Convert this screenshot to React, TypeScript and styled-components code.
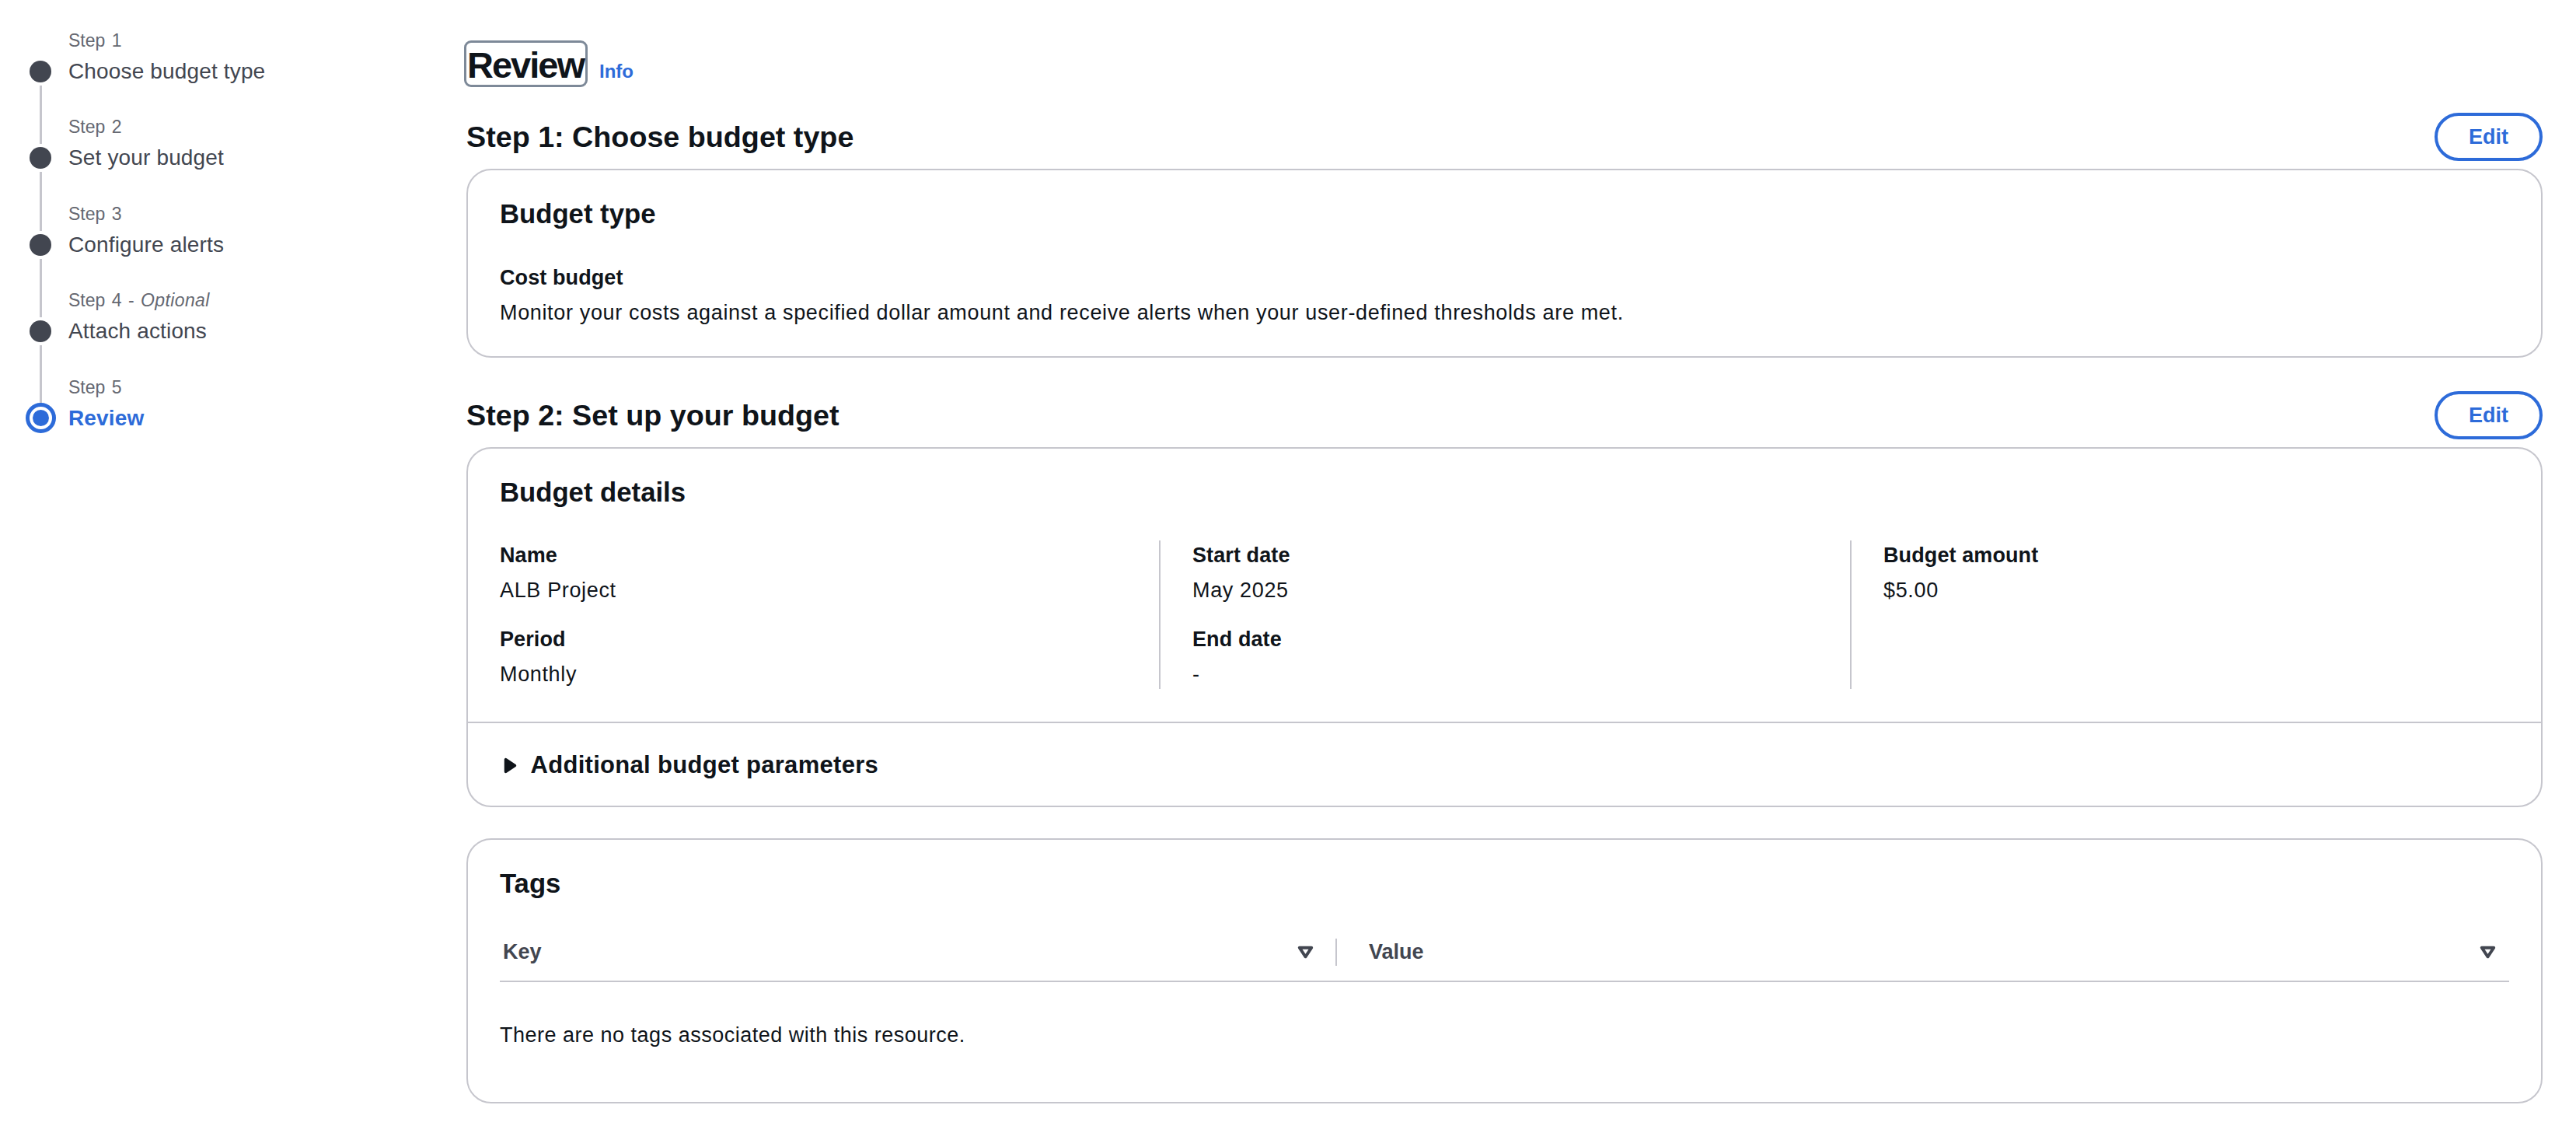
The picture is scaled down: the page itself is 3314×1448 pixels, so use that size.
import React from 'react';
import styled, { createGlobalStyle } from 'styled-components';

const BLUE = '#2d6bd9';
const BORDER = '#c6c6cd';
const TEXT = '#0f141a';
const SUBTLE = '#424650';

const GlobalStyle = createGlobalStyle`
  html, body { margin: 0; padding: 0; background: #ffffff; }
  body { font-family: "Liberation Sans", Arial, sans-serif; color: ${TEXT}; }
  * { box-sizing: border-box; }
`;

const Page = styled.div`
  display: grid;
  grid-template-columns: 600px 1fr;
  min-height: 1448px;
`;

/* ---------- Sidebar / wizard navigation ---------- */
const Sidebar = styled.nav`
  padding: 36.5px 0 0 38px;
`;

const StepList = styled.ol`
  list-style: none;
  margin: 0;
  padding: 0;
`;

const StepItem = styled.li`
  display: grid;
  grid-template-columns: 50px 1fr;
`;

const Rail = styled.div`
  display: flex;
  flex-direction: column;
  align-items: center;
  width: 28px;
`;

const RailTop = styled.div<{ $hidden?: boolean }>`
  width: 3px;
  height: 37px;
  margin-bottom: 4px;
  background: ${(p) => (p.$hidden ? 'transparent' : BORDER)};
`;

const RailBottom = styled.div<{ $hidden?: boolean }>`
  width: 3px;
  flex: 1;
  margin-top: 4px;
  background: ${(p) => (p.$hidden ? 'transparent' : BORDER)};
`;

const Dot = styled.span`
  flex: none;
  width: 28px;
  height: 28px;
  border-radius: 50%;
  background: ${SUBTLE};
`;

const ActiveRing = styled.span`
  flex: none;
  width: 39px;
  height: 39px;
  margin: -5.5px 0;
  border: 5px solid ${BLUE};
  border-radius: 50%;
  background: #fff;
  display: flex;
  align-items: center;
  justify-content: center;

  &::after {
    content: '';
    width: 21px;
    height: 21px;
    border-radius: 50%;
    background: ${BLUE};
  }
`;

const StepText = styled.div`
  display: flex;
  flex-direction: column;
  padding-bottom: 37.6px;
`;

const StepLabel = styled.span`
  font-size: 23px;
  line-height: 31px;
  word-spacing: 2px;
  color: #656871;

  em {
    font-style: italic;
    letter-spacing: 0.4px;
  }
`;

const StepTitle = styled.span<{ $active?: boolean }>`
  margin-top: 5px;
  font-size: 28px;
  line-height: 38px;
  letter-spacing: 0.15px;
  color: ${(p) => (p.$active ? BLUE : SUBTLE)};
  font-weight: ${(p) => (p.$active ? 700 : 400)};
`;

/* ---------- Main ---------- */
const Main = styled.main`
  display: flex;
  flex-direction: column;
  padding: 55px 43px 30px 0;
`;

const TitleRow = styled.div`
  display: flex;
  align-items: baseline;
  gap: 18px;
`;

const PageTitle = styled.h1`
  margin: 0;
  padding: 4px 2px 0 1px;
  font-size: 47px;
  line-height: 50px;
  letter-spacing: -2px;
  font-weight: 700;
  color: ${TEXT};
  outline: 3px solid #7d8998;
  border-radius: 6px;
`;

const InfoLink = styled.a`
  font-size: 24px;
  font-weight: 700;
  color: ${BLUE};
  text-decoration: none;
`;

const SectionHeader = styled.div<{ $first?: boolean }>`
  display: flex;
  align-items: center;
  justify-content: space-between;
  margin-top: ${(p) => (p.$first ? '36px' : '43px')};
  margin-bottom: 10px;
`;

const SectionTitle = styled.h2`
  margin: 0;
  font-size: 37.7px;
  line-height: 50px;
  font-weight: 700;
  color: ${TEXT};
`;

const EditButton = styled.button`
  height: 62px;
  padding: 0 40px;
  border: 4px solid ${BLUE};
  border-radius: 31px;
  background: #fff;
  color: ${BLUE};
  font-family: inherit;
  font-size: 27px;
  font-weight: 700;
  line-height: 38px;
  cursor: pointer;
`;

const Card = styled.section<{ $spaced?: boolean }>`
  border: 2px solid ${BORDER};
  border-radius: 32px;
  background: #fff;
  margin-top: ${(p) => (p.$spaced ? '40px' : '0')};
  overflow: hidden;
`;

const CardBody = styled.div<{ $pb: number }>`
  padding: 34px 41px ${(p) => p.$pb}px 41px;
`;

const CardTitle = styled.h3<{ $mb: number }>`
  margin: 0 0 ${(p) => p.$mb}px;
  font-size: 34.7px;
  line-height: 44px;
  font-weight: 700;
  color: ${TEXT};
`;

const KeyLabel = styled.div`
  font-size: 27px;
  line-height: 38px;
  font-weight: 700;
  letter-spacing: 0.1px;
  color: ${TEXT};
`;

const KeyValue = styled.div`
  margin-top: 7px;
  font-size: 27px;
  line-height: 38px;
  letter-spacing: 0.65px;
  color: ${TEXT};
`;

const Pair = styled.div`
  & + & {
    margin-top: 25px;
  }
`;

const Columns = styled.div`
  display: grid;
  grid-template-columns: repeat(3, 1fr);
  margin: 0 -41px;
`;

const Column = styled.div<{ $divider?: boolean }>`
  padding: 0 41px;
  border-left: ${(p) => (p.$divider ? `2px solid ${BORDER}` : 'none')};
`;

const Expandable = styled.div`
  display: flex;
  align-items: center;
  border-top: 2px solid ${BORDER};
  padding: 34px 41px 31.6px 39px;
`;

const ExpandLabel = styled.span`
  font-size: 31px;
  line-height: 40px;
  font-weight: 700;
  letter-spacing: 0.3px;
  color: ${TEXT};
`;

const CaretIcon = styled.svg`
  flex: none;
  width: 31px;
  height: 31px;
  margin-right: 10.5px;
`;

const TableHead = styled.div`
  display: flex;
  align-items: center;
  padding-bottom: 17.6px;
  border-bottom: 2px solid ${BORDER};
`;

const HeadCell = styled.div<{ $key?: boolean }>`
  display: flex;
  align-items: center;
  justify-content: space-between;
  ${(p) =>
    p.$key
      ? 'flex: 0 0 1075px; padding: 0 23.5px 0 4px;'
      : 'flex: 1; padding: 0 12px 0 41px;'}
  font-size: 27px;
  line-height: 38px;
  font-weight: 700;
  color: ${SUBTLE};
`;

const HeadDivider = styled.span`
  flex: none;
  width: 2px;
  height: 35px;
  background: ${BORDER};
`;

const SortIcon = styled.svg`
  flex: none;
  width: 31px;
  height: 31px;
`;

const EmptyText = styled.p`
  margin: 49px 0 0;
  font-size: 27px;
  line-height: 38px;
  letter-spacing: 0.5px;
  color: ${TEXT};
`;

type Step = { label: string; title: string; optional?: boolean; active?: boolean };

const steps: Step[] = [
  { label: 'Step 1', title: 'Choose budget type' },
  { label: 'Step 2', title: 'Set your budget' },
  { label: 'Step 3', title: 'Configure alerts' },
  { label: 'Step 4', title: 'Attach actions', optional: true },
  { label: 'Step 5', title: 'Review', active: true },
];

const Sort = () => (
  <SortIcon viewBox="0 0 16 16" aria-hidden="true">
    <path
      d="M4 5h8l-4 6-4-6z"
      fill="none"
      stroke={SUBTLE}
      strokeWidth={2}
      strokeLinejoin="round"
    />
  </SortIcon>
);

export default function App() {
  return (
    <>
      <GlobalStyle />
      <Page>
        <Sidebar>
          <StepList>
            {steps.map((s, i) => (
              <StepItem key={s.label}>
                <Rail>
                  <RailTop $hidden={i === 0} />
                  {s.active ? <ActiveRing /> : <Dot />}
                  <RailBottom $hidden={i === steps.length - 1} />
                </Rail>
                <StepText>
                  <StepLabel>
                    {s.label}
                    {s.optional && (
                      <>
                        {' - '}
                        <em>Optional</em>
                      </>
                    )}
                  </StepLabel>
                  <StepTitle $active={s.active}>{s.title}</StepTitle>
                </StepText>
              </StepItem>
            ))}
          </StepList>
        </Sidebar>

        <Main>
          <TitleRow>
            <PageTitle>Review</PageTitle>
            <InfoLink href="#">Info</InfoLink>
          </TitleRow>

          <SectionHeader $first>
            <SectionTitle>Step 1: Choose budget type</SectionTitle>
            <EditButton>Edit</EditButton>
          </SectionHeader>
          <Card>
            <CardBody $pb={37.6}>
              <CardTitle $mb={40.7}>Budget type</CardTitle>
              <Pair>
                <KeyLabel>Cost budget</KeyLabel>
                <KeyValue>
                  Monitor your costs against a specified dollar amount and receive alerts when your
                  user-defined thresholds are met.
                </KeyValue>
              </Pair>
            </CardBody>
          </Card>

          <SectionHeader>
            <SectionTitle>Step 2: Set up your budget</SectionTitle>
            <EditButton>Edit</EditButton>
          </SectionHeader>
          <Card>
            <CardBody $pb={42}>
              <CardTitle $mb={40}>Budget details</CardTitle>
              <Columns>
                <Column>
                  <Pair>
                    <KeyLabel>Name</KeyLabel>
                    <KeyValue>ALB Project</KeyValue>
                  </Pair>
                  <Pair>
                    <KeyLabel>Period</KeyLabel>
                    <KeyValue>Monthly</KeyValue>
                  </Pair>
                </Column>
                <Column $divider>
                  <Pair>
                    <KeyLabel>Start date</KeyLabel>
                    <KeyValue>May 2025</KeyValue>
                  </Pair>
                  <Pair>
                    <KeyLabel>End date</KeyLabel>
                    <KeyValue>-</KeyValue>
                  </Pair>
                </Column>
                <Column $divider>
                  <Pair>
                    <KeyLabel>Budget amount</KeyLabel>
                    <KeyValue>$5.00</KeyValue>
                  </Pair>
                </Column>
              </Columns>
            </CardBody>
            <Expandable>
              <CaretIcon viewBox="0 0 16 16" aria-hidden="true">
                <path
                  d="M5 4v8l6-4-6-4z"
                  fill={TEXT}
                  stroke={TEXT}
                  strokeWidth={2}
                  strokeLinejoin="round"
                />
              </CaretIcon>
              <ExpandLabel>Additional budget parameters</ExpandLabel>
            </Expandable>
          </Card>

          <Card $spaced>
            <CardBody $pb={67}>
              <CardTitle $mb={47.4}>Tags</CardTitle>
              <TableHead>
                <HeadCell $key>
                  <span>Key</span>
                  <Sort />
                </HeadCell>
                <HeadDivider />
                <HeadCell>
                  <span>Value</span>
                  <Sort />
                </HeadCell>
              </TableHead>
              <EmptyText>There are no tags associated with this resource.</EmptyText>
            </CardBody>
          </Card>
        </Main>
      </Page>
    </>
  );
}
